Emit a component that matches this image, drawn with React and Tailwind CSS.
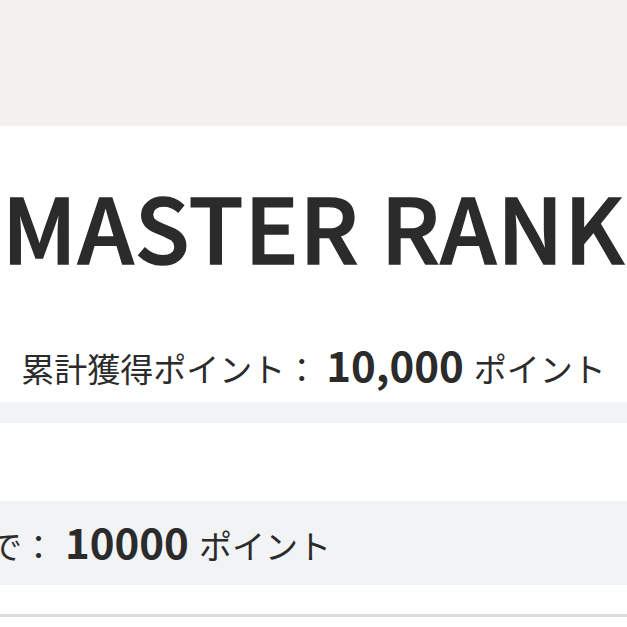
import React from 'react';

const font = { fontFamily: '"Noto Sans CJK JP", "Noto Sans", sans-serif' };

const App = () => {
  return (
    <div className="w-[627px] h-[627px] overflow-hidden bg-white text-[#2b2b2b]" style={font}>
      {/* Header area */}
      <div className="h-[126px] bg-[#f2f1ef]" />

      {/* Rank card */}
      <div className="h-[276px] bg-white flex flex-col items-center">
        <h1 className="mt-[44px] text-[90px] leading-[110px] font-medium whitespace-nowrap tracking-[1px] [-webkit-text-stroke:1.5px_#2b2b2b]">
          MASTER RANK
        </h1>
        <p className="mt-[62px] flex items-baseline whitespace-nowrap text-[33px] leading-[44px]">
          <span>累計獲得ポイント：</span>
          <span className="ml-[8px] mr-[10px] text-[42px] font-bold">10,000</span>
          <span>ポイント</span>
        </p>
      </div>

      <div className="h-[21px] bg-[#f1f3f4]" />

      <div className="h-[78px] bg-white" />

      {/* Next rank */}
      <div className="h-[84px] bg-[#f2f3f5] flex items-center overflow-hidden">
        <p className="-ml-[209px] flex items-baseline whitespace-nowrap text-[33px] leading-[44px]">
          <span>次のランクまで：</span>
          <span className="ml-[10px] mr-[10px] text-[42px] font-bold">10000</span>
          <span>ポイント</span>
        </p>
      </div>

      <div className="h-[29px] bg-white" />
      <div className="h-[3px] bg-[#dddddd]" />
    </div>
  );
};

export default App;
